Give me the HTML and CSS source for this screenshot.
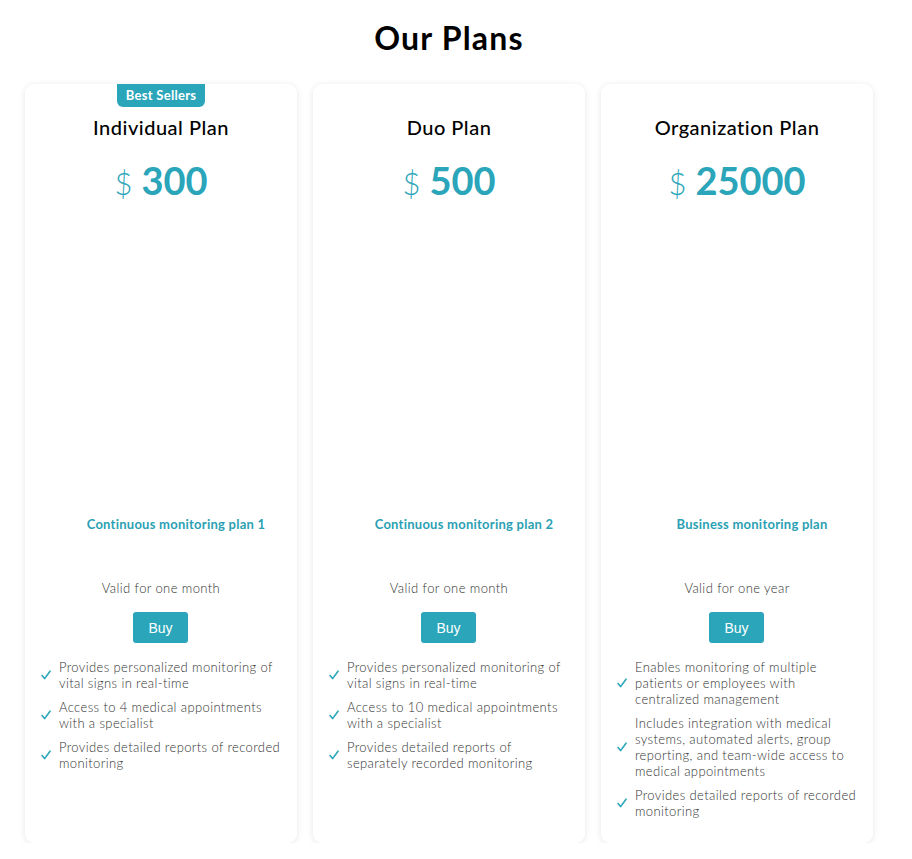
FILE: index.html
```html
<!DOCTYPE html>
<html lang="en">
<head>
<meta charset="utf-8">
<title>Our Plans</title>
<link rel="stylesheet" href="styles.css">
</head>
<body>
<section class="plans">
  <h1 class="plans-title">Our Plans</h1>
  <div class="plans-grid">
    <article class="card">
      <span class="badge">Best Sellers</span>
      <h2 class="card-name">Individual Plan</h2>
      <div class="price"><span class="currency">$</span><span class="amount">300</span></div>
      <p class="desc">Continuous monitoring plan 1</p>
      <p class="valid">Valid for one month</p>
      <button class="buy">Buy</button>
      <ul class="features">
        <li><svg class="check" viewBox="0 0 10 10"><path d="M1 5.6 L3.6 8.6 L9 1.2"/></svg><span>Provides personalized monitoring of vital signs in real-time</span></li>
        <li><svg class="check" viewBox="0 0 10 10"><path d="M1 5.6 L3.6 8.6 L9 1.2"/></svg><span>Access to 4 medical appointments with a specialist</span></li>
        <li><svg class="check" viewBox="0 0 10 10"><path d="M1 5.6 L3.6 8.6 L9 1.2"/></svg><span>Provides detailed reports of recorded monitoring</span></li>
      </ul>
    </article>
    <article class="card">
      <h2 class="card-name">Duo Plan</h2>
      <div class="price"><span class="currency">$</span><span class="amount">500</span></div>
      <p class="desc">Continuous monitoring plan 2</p>
      <p class="valid">Valid for one month</p>
      <button class="buy">Buy</button>
      <ul class="features">
        <li><svg class="check" viewBox="0 0 10 10"><path d="M1 5.6 L3.6 8.6 L9 1.2"/></svg><span>Provides personalized monitoring of vital signs in real-time</span></li>
        <li><svg class="check" viewBox="0 0 10 10"><path d="M1 5.6 L3.6 8.6 L9 1.2"/></svg><span>Access to 10 medical appointments with a specialist</span></li>
        <li><svg class="check" viewBox="0 0 10 10"><path d="M1 5.6 L3.6 8.6 L9 1.2"/></svg><span>Provides detailed reports of separately recorded monitoring</span></li>
      </ul>
    </article>
    <article class="card">
      <h2 class="card-name">Organization Plan</h2>
      <div class="price"><span class="currency">$</span><span class="amount">25000</span></div>
      <p class="desc">Business monitoring plan</p>
      <p class="valid">Valid for one year</p>
      <button class="buy">Buy</button>
      <ul class="features">
        <li><svg class="check" viewBox="0 0 10 10"><path d="M1 5.6 L3.6 8.6 L9 1.2"/></svg><span>Enables monitoring of multiple patients or employees with centralized management</span></li>
        <li><svg class="check" viewBox="0 0 10 10"><path d="M1 5.6 L3.6 8.6 L9 1.2"/></svg><span>Includes integration with medical systems, automated alerts, group reporting, and team-wide access to medical appointments</span></li>
        <li><svg class="check" viewBox="0 0 10 10"><path d="M1 5.6 L3.6 8.6 L9 1.2"/></svg><span>Provides detailed reports of recorded monitoring</span></li>
      </ul>
    </article>
  </div>
</section>
</body>
</html>
```

FILE: styles.css
```css
* { box-sizing: border-box; }
html, body { margin: 0; padding: 0; background: #fff; }
body {
  font-family: "Lato", "Noto Sans", sans-serif;
  color: #222;
}
.plans {
  width: 848px;
  margin-left: 25px;
  padding-top: 18px;
}
.plans-title {
  margin: 0;
  text-align: center;
  font-size: 32px;
  line-height: 40px;
  font-weight: 700;
  letter-spacing: 1.2px;
  color: #000;
}
.plans-grid {
  display: grid;
  grid-template-columns: repeat(3, 272px);
  column-gap: 16px;
  margin-top: 26px;
  align-items: stretch;
}
.card {
  position: relative;
  background: #fff;
  border-radius: 9px;
  box-shadow: 0 1px 6px rgba(0, 0, 0, 0.10);
  padding: 31px 15px 24px 15px;
  display: flex;
  flex-direction: column;
  align-items: center;
  min-height: 759px;
}
.badge {
  position: absolute;
  top: 0;
  left: 92px;
  width: 88px;
  height: 23px;
  background: #2aa5b9;
  color: #fff;
  font-size: 13px;
  font-weight: 700;
  letter-spacing: 0.3px;
  line-height: 23px;
  text-align: center;
  border-radius: 0 0 6px 6px;
}
.card-name {
  margin: 0;
  font-size: 20px;
  line-height: 24px;
  font-weight: 500;
  letter-spacing: 0.5px;
  color: #000;
}
.price {
  margin-top: 18px;
  display: flex;
  align-items: baseline;
  color: #2aa5b9;
  height: 44px;
}
.currency {
  font-size: 31px;
  font-weight: 300;
  margin-right: 9px;
}
.amount {
  font-size: 38px;
  font-weight: 700;
}
.desc {
  margin: 315px 0 0;
  padding-left: 30px;
  font-size: 13px;
  line-height: 16px;
  font-weight: 700;
  letter-spacing: 0.25px;
  color: #2b9fb4;
}
.valid {
  margin: 48px 0 0;
  font-size: 13px;
  line-height: 16px;
  font-weight: 300;
  letter-spacing: 0.4px;
  color: #333;
}
.buy {
  margin-top: 16px;
  margin-right: 1px;
  width: 55px;
  height: 31px;
  border: none;
  border-radius: 3px;
  background: #2aa5b9;
  color: #fff;
  font-family: "Liberation Sans", Arial, sans-serif;
  font-size: 14px;
  padding: 0;
}
.features {
  list-style: none;
  margin: 16px 0 0;
  padding: 0;
  align-self: stretch;
  display: flex;
  flex-direction: column;
  gap: 8px;
}
.features li {
  display: flex;
  align-items: center;
  font-size: 13px;
  line-height: 16px;
  font-weight: 300;
  letter-spacing: 0.38px;
  color: #333;
}
.check {
  flex: none;
  width: 10px;
  height: 10px;
  margin: 0 8px 0 1px;
  fill: none;
  stroke: #2aa5b9;
  stroke-width: 1.6;
  stroke-linecap: round;
  stroke-linejoin: round;
}
```
